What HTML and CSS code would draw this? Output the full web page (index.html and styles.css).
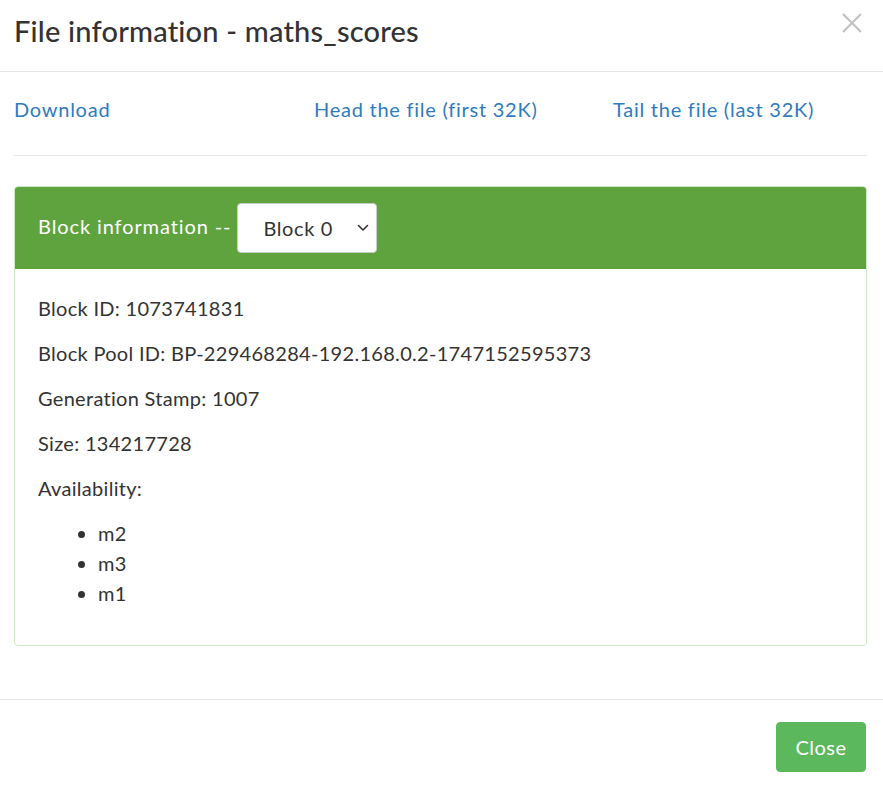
FILE: index.html
```html
<!DOCTYPE html>
<html>
<head>
<meta charset="utf-8">
<link rel="stylesheet" href="styles.css">
</head>
<body>
<div class="modal">
  <div class="modal-header">
    <h4 class="modal-title">File information - maths_scores</h4>
    <button class="close" aria-label="Close">
      <svg width="20" height="20" viewBox="0 0 20 20"><path d="M1 1 L19 19 M19 1 L1 19" stroke="#c2c2c2" stroke-width="2.2" fill="none"/></svg>
    </button>
  </div>
  <div class="modal-body">
    <div class="links">
      <a href="#">Download</a>
      <a href="#">Head the file (first 32K)</a>
      <a href="#">Tail the file (last 32K)</a>
    </div>
    <hr class="sep">
    <div class="panel">
      <div class="panel-heading">
        <span class="panel-title">Block information --</span>
        <div class="select">
          <span>Block 0</span>
          <svg class="chev" width="12" height="8" viewBox="0 0 12 8"><path d="M1.5 1.5 L6 6 L10.5 1.5" fill="none" stroke="#333" stroke-width="1.6" stroke-linecap="round" stroke-linejoin="round"/></svg>
        </div>
      </div>
      <div class="panel-body">
        <p>Block ID: 1073741831</p>
        <p>Block Pool ID: BP-229468284-192.168.0.2-1747152595373</p>
        <p>Generation Stamp: 1007</p>
        <p>Size: 134217728</p>
        <p>Availability:</p>
        <ul>
          <li>m2</li>
          <li>m3</li>
          <li>m1</li>
        </ul>
      </div>
    </div>
  </div>
  <div class="modal-footer">
    <button class="btn-close">Close</button>
  </div>
</div>
</body>
</html>
```

FILE: styles.css
```css
html, body {
  margin: 0;
  padding: 0;
  background: #fff;
}
body {
  font-family: "Lato", "Noto Sans", sans-serif;
  font-size: 20px;
  line-height: 1.5;
  color: #333;
  letter-spacing: 0.3px;
}
.modal {
  width: 883px;
}
.modal-header {
  display: flex;
  align-items: flex-start;
  justify-content: space-between;
  padding: 10px 21px 0 14px;
  height: 61px;
  border-bottom: 1px solid #e5e5e5;
}
.modal-title {
  margin: 0;
  font-size: 29px;
  font-weight: 500;
  line-height: 42px;
  letter-spacing: 0.2px;
  color: #333;
}
.close {
  border: 0;
  background: none;
  padding: 0;
  margin-top: 3px;
  width: 20px;
  height: 20px;
  display: block;
}
.close svg {
  display: block;
}
.modal-body {
  padding: 15px 16px 53px 14px;
}
.links {
  display: grid;
  grid-template-columns: 300px 299px auto;
  padding-top: 7px;
  line-height: 30px;
  letter-spacing: 0.75px;
}
.links a {
  color: #2f7bbf;
  text-decoration: none;
}
.sep {
  margin: 31px 0 30px 0;
  border: 0;
  border-top: 1px solid #e8e8e8;
}
.panel {
  border: 1px solid #d0e9c6;
  border-radius: 4px;
  overflow: hidden;
}
.panel-heading {
  background: #5fa33e;
  color: #fff;
  display: flex;
  align-items: center;
  padding: 16px 23px;
}
.panel-title {
  font-size: 20px;
  letter-spacing: 0.9px;
  padding-bottom: 5px;
}
.select {
  margin-left: 6px;
  width: 140px;
  height: 50px;
  box-sizing: border-box;
  background: #fff;
  border-radius: 4px;
  border: 1px solid #ccc;
  color: #333;
  display: flex;
  align-items: center;
  justify-content: space-between;
  padding: 0 7px 0 25px;
  letter-spacing: 0.6px;
}
.panel-body {
  padding: 24px 23px 22px 23px;
}
.panel-body p {
  margin: 0 0 15px 0;
}
.panel-body ul {
  margin: 0 0 15px 0;
  padding-left: 60px;
}
.modal-footer {
  border-top: 1px solid #e5e5e5;
  display: flex;
  justify-content: flex-end;
  padding: 22px 17px 13px 15px;
}
.btn-close {
  background: #5cb85c;
  border: 1px solid #5cb85c;
  color: #fff;
  font-family: inherit;
  font-size: 20px;
  letter-spacing: 0.5px;
  line-height: 30px;
  width: 90px;
  height: 50px;
  border-radius: 4px;
  padding: 0;
}
```
